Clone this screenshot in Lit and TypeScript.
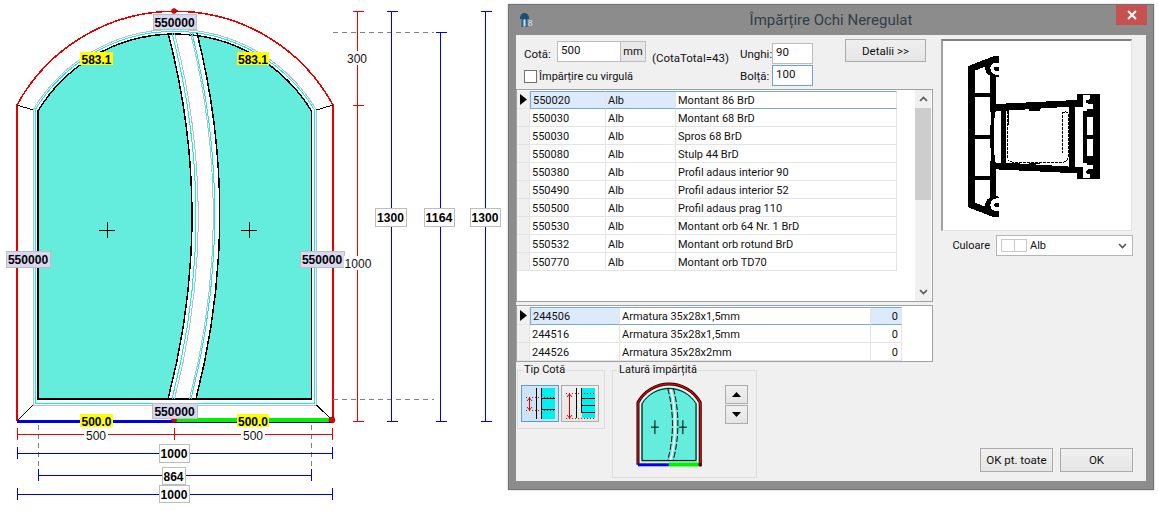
import { LitElement, html, css, svg } from "lit";
import { customElement } from "lit/decorators.js";

const UI_FONT = css`Roboto, "Noto Sans", sans-serif`;

const PROFILES = [
  ["550020", "Alb", "Montant 86 BrD"],
  ["550030", "Alb", "Montant 68 BrD"],
  ["550030", "Alb", "Spros 68 BrD"],
  ["550080", "Alb", "Stulp 44 BrD"],
  ["550380", "Alb", "Profil adaus interior 90"],
  ["550490", "Alb", "Profil adaus interior 52"],
  ["550500", "Alb", "Profil adaus prag 110"],
  ["550530", "Alb", "Montant orb 64 Nr. 1 BrD"],
  ["550532", "Alb", "Montant orb rotund BrD"],
  ["550770", "Alb", "Montant orb TD70"],
];

const REINFORCEMENTS = [
  ["244506", "Armatura 35x28x1,5mm", "0"],
  ["244516", "Armatura 35x28x1,5mm", "0"],
  ["244526", "Armatura 35x28x2mm", "0"],
];

// window outline, shared by the big drawing and the small picker
const OUTER = "M17 421 V105 A180 180 0 0 1 333 105 V421";
const GLASS = "M38 111 A160 160 0 0 1 311.5 111 V399 H38 Z";
const CYAN = "M35 110 A163.5 163.5 0 0 1 314.5 110 V403 H35 Z";
const GRAY = "M33 110 A165 165 0 0 1 316.5 110 V405 H33 Z";
const MULLION_L = "M168 33 Q216 216 168 399";
const MULLION_R = "M197 33 Q243 216 196 399";
const MULLION_FILL = "M168 33 Q216 216 168 399 L196 399 Q243 216 197 33 Z";

const hDim = (x1: number, x2: number, y: number, cls: string) => svg`
  <path class=${cls} d="M${x1} ${y} H${x2} M${x1} ${y - 6} V${y + 6} M${x2} ${y - 6} V${y + 6}" />`;

const vDim = (x: number, y1: number, y2: number, cls: string) => svg`
  <path class=${cls} d="M${x} ${y1} V${y2} M${x - 5} ${y1} H${x + 6} M${x - 5} ${y2} H${x + 6}" />`;

// the reference font is tall and narrow, so squeeze digits to their measured width
const textWidth = (text: string) => text.replace(".", "").length * 6.7 + (text.includes(".") ? 3.2 : 0);

const tag = (x: number, y: number, w: number, h: number, text: string, cls: string) => svg`
  <rect class="tag ${cls}" x=${x} y=${y} width=${w} height=${h} />
  <text
    class="tag-text ${cls}"
    x=${x + w / 2}
    y=${y + h / 2 + 5}
    textLength=${textWidth(text)}
    lengthAdjust="spacingAndGlyphs"
  >${text}</text>`;

@customElement("window-drawing")
class WindowDrawing extends LitElement {
  static styles = css`
    :host {
      display: block;
      width: 508px;
      height: 511px;
    }
    svg {
      display: block;
    }
    path,
    line,
    rect {
      shape-rendering: crispEdges;
      fill: none;
    }
    .glass {
      fill: #64ecdd;
    }
    .white {
      fill: #fff;
    }
    .ln-black {
      stroke: #000;
      stroke-width: 1.5;
    }
    .ln-cyan {
      stroke: #00f2f2;
      stroke-width: 1;
    }
    .ln-gray {
      stroke: #bdbdbd;
      stroke-width: 1;
    }
    .ln-red {
      stroke: #e80000;
      stroke-width: 1.6;
    }
    .thin-black {
      stroke: #000;
    }
    .d-red {
      stroke: #f00000;
    }
    .d-blue {
      stroke: #0000e6;
    }
    .dash {
      stroke: #808080;
      stroke-dasharray: 5 4;
    }
    .bar-blue {
      stroke: #0000f0;
      stroke-width: 3;
    }
    .bar-green {
      stroke: #00f000;
      stroke-width: 4;
    }
    .dot {
      fill: #e80000;
      stroke: #600;
      stroke-width: 0.5;
    }
    .tag {
      stroke: none;
    }
    .tag.code {
      fill: #d8d8f0;
      stroke: #bdbdbd;
    }
    .tag.len {
      fill: #ffff00;
    }
    .tag.dim {
      fill: #fff;
      stroke: #bdbdbd;
    }
    .tag.plain {
      fill: #fff;
    }
    .tag-text {
      font: bold 13px "Liberation Sans", Arial, sans-serif;
      text-anchor: middle;
      fill: #000;
    }
    .tag-text.plain {
      font: 13px "Liberation Sans", Arial, sans-serif;
      fill: #111;
    }
  `;

  render() {
    return html`
      <svg width="508" height="511" viewBox="0 0 508 511">
        <path class="white ln-red" d=${OUTER} />
        <path class="white ln-gray" d=${GRAY} />
        <path class="ln-cyan" d=${CYAN} />
        <path class="glass" d=${GLASS} />
        <path class="white" d=${MULLION_FILL} />
        <path class="ln-black" d=${GLASS} />
        <path class="ln-black" d=${MULLION_L} />
        <path class="ln-black" d=${MULLION_R} />
        <path class="ln-cyan" d="M172 33 Q220 216 172 399 M192 33 Q238 216 191 399" />
        <path class="ln-gray" d="M174.5 33 Q222 216 174.5 399 M190.5 33 Q236.5 216 189.5 399" />
        <path class="thin-black" d="M17 105 L33 110 M333 105 L316.5 110 M17 421 L33 405 M333 421 L316.5 405" />
        <path class="thin-black" d="M99 230 H115 M107 222 V238 M241 230 H257 M249 222 V238" />
        <path class="bar-blue" d="M17 421.5 H174" />
        <path class="bar-green" d="M174 420 H333" />
        <path class="d-blue" d="M174 422.5 H333" />
        <circle class="dot" cx="174" cy="11" r="2.5" />
        <circle class="dot" cx="174" cy="420" r="2.5" />
        <circle class="dot" cx="332" cy="420" r="3" />

        <path class="dash" d="M333 32 H434 M333 399 H434 M38 425 V469 M311 425 V469" />
        ${hDim(17, 174, 434, "d-red")} ${hDim(174, 332, 434, "d-red")}
        ${hDim(17, 332, 453, "d-blue")} ${hDim(38, 311, 475, "d-blue")}
        ${hDim(17, 332, 494, "d-blue")}
        ${vDim(357.5, 11, 105, "d-red")} ${vDim(357.5, 105, 421, "d-red")}
        ${vDim(391.5, 11, 421, "d-blue")} ${vDim(440.5, 32, 421, "d-blue")}
        ${vDim(485.5, 11, 421, "d-blue")}

        ${tag(153, 14, 43, 15, "550000", "code")} ${tag(6, 251, 44, 16, "550000", "code")}
        ${tag(300, 251, 44, 16, "550000", "code")} ${tag(152, 403, 45, 15, "550000", "code")}
        ${tag(80, 52, 33, 13, "583.1", "len")} ${tag(237, 52, 32, 13, "583.1", "len")}
        ${tag(80, 414, 33, 13, "500.0", "len")} ${tag(237, 414, 32, 13, "500.0", "len")}
        ${tag(84, 428, 24, 13, "500", "plain")} ${tag(241, 428, 24, 13, "500", "plain")}
        ${tag(159, 444, 30, 18, "1000", "dim")} ${tag(162, 467, 23, 17, "864", "dim")}
        ${tag(159, 485, 30, 17, "1000", "dim")}
        ${tag(345, 51, 24, 14, "300", "plain")} ${tag(344, 256, 28, 14, "1000", "plain")}
        ${tag(375, 208, 31, 18, "1300", "dim")} ${tag(424, 208, 30, 18, "1164", "dim")}
        ${tag(470, 208, 30, 18, "1300", "dim")}
      </svg>
    `;
  }
}

@customElement("split-dialog")
class SplitDialog extends LitElement {
  static styles = css`
    * {
      box-sizing: border-box;
    }
    :host {
      display: block;
      width: 644px;
      height: 484px;
      margin-top: 4px;
      background: #8c8c8c;
      border: 1px solid #727272;
      box-shadow: 0 0 2px rgba(0, 0, 0, 0.25);
      font: 11px ${UI_FONT};
      color: #111;
    }
    .titlebar {
      display: grid;
      grid-template-columns: 1fr auto 1fr;
      height: 30px;
    }
    .app-icon {
      margin: 7px 0 0 11px;
    }
    .title {
      font-size: 15px;
      color: #333d47;
      padding-top: 6px;
    }
    .close {
      justify-self: end;
      display: flex;
      align-items: center;
      justify-content: center;
      width: 31px;
      height: 20px;
      margin-right: 6px;
      background: #c75050;
    }
    .client {
      display: grid;
      grid-template-columns: 417px 192px;
      column-gap: 8px;
      height: 446px;
      margin: 0 7px;
      background: #f0f0f0;
    }
    .left,
    .right {
      display: flex;
      flex-direction: column;
      min-width: 0;
    }
    .top {
      display: flex;
      height: 54px;
      padding-left: 8px;
      white-space: nowrap;
    }
    .cota {
      width: 122px;
      margin-top: 6px;
    }
    .cota-row {
      display: flex;
      align-items: flex-end;
    }
    .cota-row label {
      width: 33px;
      padding-bottom: 1px;
      font-size: 11.5px;
    }
    .field {
      height: 21px;
      padding: 0 3px;
      background: #fff;
      border: 1px solid #bdbdbd;
      line-height: 17px;
      font-size: 11.5px;
    }
    .field.value {
      width: 64px;
    }
    .field.focus {
      border-color: #6f9fd3;
    }
    .unit {
      display: flex;
      align-items: center;
      justify-content: center;
      width: 25px;
      height: 21px;
      border: 1px solid #bdbdbd;
      border-left: none;
      background: #e8e8e8;
    }
    .check {
      display: flex;
      align-items: center;
      gap: 2px;
      margin-top: 8px;
    }
    .box {
      flex: none;
      width: 13px;
      height: 13px;
      background: #fff;
      border: 1px solid #707070;
    }
    .total {
      width: 88px;
      margin: 16px 0 0 6px;
      font-size: 11.5px;
    }
    .angles {
      display: grid;
      grid-template-columns: 32px 41px;
      grid-auto-rows: 21px;
      row-gap: 1px;
      align-items: center;
      margin-top: 8px;
      font-size: 11.5px;
    }
    button {
      font: inherit;
      font-size: 11.5px;
      color: inherit;
      padding: 0;
      border: 1px solid #acacac;
      background: linear-gradient(#f0f0f0, #e5e5e5);
    }
    .details {
      width: 81px;
      height: 23px;
      margin: 4px 0 0 32px;
    }
    .list {
      display: flex;
      background: #fff;
      border: 1px solid #a0a0a0;
    }
    .list.profiles {
      height: 213px;
      padding-top: 1px;
    }
    .list.reinforcements {
      height: 57px;
      margin-top: 3px;
      padding-top: 1px;
    }
    .rows {
      flex: none;
    }
    .row {
      display: grid;
      height: 18px;
      line-height: 19px;
    }
    .profiles .row {
      grid-template-columns: 13px 76px 70px 221px;
    }
    .reinforcements .row {
      grid-template-columns: 13px 90px 251px 31px;
    }
    .cell {
      padding-left: 2px;
      border-right: 1px solid #e4e4e4;
      border-bottom: 1px solid #e4e4e4;
      white-space: nowrap;
      overflow: hidden;
    }
    .cell.num {
      padding: 0 3px 0 0;
      text-align: right;
    }
    .marker {
      padding: 0;
      background: #f0f0f0;
      display: flex;
      align-items: center;
      justify-content: center;
    }
    .row.current .cell:not(.marker) {
      border-top: 1px solid #7da7d9;
      border-bottom: 1px solid #7da7d9;
      line-height: 17px;
    }
    .row.current .cell.hl {
      background: #dcebfb;
    }
    .row.current .cell.hl-first {
      border-left: 1px solid #7da7d9;
    }
    .scrollbar {
      display: flex;
      flex-direction: column;
      align-items: center;
      width: 16px;
      margin: -1px 0 0 18px;
      background: #f0f0f0;
    }
    .sb-arrow {
      display: flex;
      align-items: center;
      justify-content: center;
      height: 18px;
    }
    .sb-thumb {
      width: 100%;
      height: 92px;
      background: #cdcdcd;
    }
    .sb-track {
      flex: 1;
    }
    .bottom {
      display: flex;
      align-items: flex-start;
      gap: 7px;
      padding-left: 1px;
    }
    fieldset {
      min-inline-size: 0;
      margin: 0;
      border: 1px solid #dcdcdc;
      padding: 0;
    }
    legend {
      margin-left: 5px;
      padding: 0 1px;
      line-height: 16px;
      height: 16px;
    }
    .tip {
      width: 88px;
      height: 67px;
    }
    .tip-body {
      display: flex;
      gap: 2px;
      padding: 7px 0 0 3px;
    }
    .tip-btn {
      display: block;
      width: 38px;
      height: 37px;
    }
    .tip-btn.on {
      background: #cce4f7;
      border-color: #5a9ad9;
    }
    .latura {
      width: 145px;
      height: 116px;
    }
    .latura-body {
      display: flex;
      align-items: flex-start;
      padding: 4px 0 0 23px;
    }
    .updown {
      display: flex;
      flex-direction: column;
      gap: 1px;
      margin: 3px 0 0 23px;
    }
    .updown button {
      display: flex;
      align-items: center;
      justify-content: center;
      width: 23px;
      height: 19px;
    }
    .right {
      padding-top: 4px;
    }
    .preview {
      width: 191px;
      height: 192px;
      background: #fff;
      border: 1px solid #e2e2e2;
      border-top: 2px solid #808080;
      border-left: 2px solid #a0a0a0;
    }
    .preview svg {
      shape-rendering: crispEdges;
    }
    .color-row {
      display: flex;
      align-items: center;
      justify-content: flex-end;
      gap: 6px;
      margin-top: 4px;
    }
    .select {
      display: flex;
      align-items: center;
      width: 137px;
      height: 21px;
      padding: 0 5px 0 4px;
      background: #fff;
      border: 1px solid #b5b5b5;
    }
    .swatch {
      display: grid;
      grid-template-columns: 1fr 1fr;
      width: 26px;
      height: 13px;
      margin-right: 3px;
      border: 1px solid #c8c8c8;
    }
    .swatch i + i {
      border-left: 1px solid #c8c8c8;
    }
    .chev {
      margin-left: auto;
    }
    .actions {
      display: flex;
      justify-content: flex-end;
      gap: 7px;
      margin-top: auto;
      padding-bottom: 9px;
    }
    .actions button {
      width: 73px;
      height: 24px;
    }
  `;

  private _marker() {
    return html`<svg width="7" height="11" viewBox="0 0 7 11"><path d="M0 0 L7 5.5 L0 11 Z" fill="#000" /></svg>`;
  }

  private _chevron(up: boolean) {
    return html`<svg width="9" height="6" viewBox="0 0 9 6">
      <path d=${up ? "M1 5 L4.5 1.5 L8 5" : "M1 1 L4.5 4.5 L8 1"} fill="none" stroke="#555" stroke-width="1.6" />
    </svg>`;
  }

  private _profileRow(r: string[], i: number) {
    const current = i === 0;
    return html`<div class="row ${current ? "current" : ""}">
      <div class="cell marker">${current ? this._marker() : ""}</div>
      <div class="cell hl hl-first">${r[0]}</div>
      <div class="cell hl">${r[1]}</div>
      <div class="cell">${r[2]}</div>
    </div>`;
  }

  private _reinforcementRow(r: string[], i: number) {
    const current = i === 0;
    return html`<div class="row ${current ? "current" : ""}">
      <div class="cell marker">${current ? this._marker() : ""}</div>
      <div class="cell hl hl-first">${r[0]}</div>
      <div class="cell">${r[1]}</div>
      <div class="cell num hl">${r[2]}</div>
    </div>`;
  }

  private _profileHalf() {
    // upper half of the section, the lower half is the same thing mirrored
    return svg`
      <path fill="#000" d="M115 78 L192 48 H208 V110 L197 112 V192 L440 180 V162 H510 V291 H115 Z" />
      <g fill="#fff">
        <path d="M135 92 L165 80 C165 95 172 105 180 106 V160 H135 Z" />
        <path d="M207 68 H195 C185 68 178 80 182 92 C186 102 197 106 207 106 V92 L197 92 C190 88 190 82 196 80 L207 80 Z" />
        <path d="M135 172 H180 C182 210 183 250 181 285 H135 Z" />
        <path d="M197 212 H212 V291 H193 C191 260 192 235 197 212 Z" />
        <path d="M228 212 L420 200 V291 H228 Z" />
        <path d="M434 200 H458 V291 H434 Z" />
        <path d="M460 165 H480 V178 L468 180 C466 190 475 195 490 192 V206 H470 V212 H458 V205 C462 190 458 175 460 165 Z" />
        <path d="M470 232 H490 V285 H470 Z" />
      </g>
      <path fill="#000" d="M418 200 H434 V291 H418 Z M212 208 H228 V291 H212 Z M296 208 H330 V212 H296 Z" />`;
  }

  private _profileSection() {
    // traced in 3x zoom coordinates, hence the odd viewBox
    return html`<svg width="189" height="189" viewBox="39 3 567 567">
      ${this._profileHalf()}
      <g transform="matrix(1 0 0 -1 0 580)">${this._profileHalf()}</g>
      <path fill="#000" d="M135 285 H180 V297 H135 Z M470 285 H490 V297 H470 Z" />
      <path
        fill="none"
        stroke="#000"
        stroke-width="3"
        stroke-dasharray="9 3"
        d="M232 214 V352 Q232 366 245 366 H402 Q416 360 416 345 L414 222 Q412 212 398 218 L398 340"
      />
      <path fill="none" stroke="#000" stroke-width="3" d="M236 214 V256" />
    </svg>`;
  }

  private _tipIconA() {
    return html`<svg width="36" height="35" viewBox="0 0 36 35">
      <rect x="20" y="2" width="13" height="31" fill="#00f0f0" />
      <path d="M14.5 2 V33 M19.5 2 V33 M20 12.5 H33 M20 23.5 H33" stroke="#000" fill="none" />
      <path d="M4 11.5 H33 M4 24.5 H33" stroke="#e00000" stroke-dasharray="1 2" fill="none" />
      <path d="M7.5 12 V24 M5 15 L7.5 12 L10 15 M5 21 L7.5 24 L10 21" stroke="#e00000" fill="none" />
    </svg>`;
  }

  private _tipIconB() {
    return html`<svg width="36" height="35" viewBox="0 0 36 35">
      <rect x="20" y="2" width="13" height="30" fill="#00f0f0" />
      <path d="M14.5 2 V32 M19.5 2 V26.5 H33 M20 12.5 H33 M20 19.5 H33" stroke="#000" fill="none" />
      <path d="M4 7.5 H33 M4 32.5 H33" stroke="#e00000" stroke-dasharray="1 2" fill="none" />
      <path d="M7.5 8 V32 M5 11 L7.5 8 L10 11 M5 29 L7.5 32 L10 29" stroke="#e00000" fill="none" />
    </svg>`;
  }

  private _miniWindow() {
    const stroke = (color: string, w = 1, extra = "") =>
      `fill:none;stroke:${color};stroke-width:${w}px;vector-effect:non-scaling-stroke;${extra}`;
    return html`<svg width="66" height="85" viewBox="7 1 335 431">
      <path d=${OUTER} fill="#fff" style=${stroke("#000", 3)} />
      <path d=${OUTER} style=${stroke("#e00000", 1.5)} />
      <path d=${CYAN} style=${stroke("#00e8e8")} />
      <path d=${GLASS} fill="#64ecdd" />
      <path d=${MULLION_FILL} fill="#64ecdd" />
      <path d="M178 33 Q226 216 178 399 L186 399 Q233 216 187 33 Z" fill="#fff" />
      <path d=${GLASS} style=${stroke("#000")} />
      <path d=${MULLION_L} style=${stroke("#000", 1, "stroke-dasharray:6 2;")} />
      <path d=${MULLION_R} style=${stroke("#000", 1, "stroke-dasharray:6 2;")} />
      <path d="M83 230 H123 M103 195 V265 M225 230 H265 M245 195 V265" style=${stroke("#000")} />
      <path d="M17 421 H174" style=${stroke("#0000f0", 3)} />
      <path d="M174 419 H333" style=${stroke("#00f000", 4)} />
      <circle cx="333" cy="420" r="10" fill="#600" />
    </svg>`;
  }

  render() {
    return html`
      <div class="titlebar">
        <svg class="app-icon" width="14" height="15" viewBox="0 0 14 15">
          <path d="M0 6 A4.5 5 0 0 1 9 6 V7 H0 Z" fill="#1d4f74" />
          <rect x="1.5" y="7" width="6" height="8" fill="#2d6185" />
          <rect x="3.5" y="7.5" width="2" height="7" fill="#cfe2ee" />
          <text x="8" y="14" font-size="9" font-family="Liberation Serif, serif" fill="#dfe9f0">8</text>
        </svg>
        <div class="title">Împărțire Ochi Neregulat</div>
        <div class="close">
          <svg width="10" height="10" viewBox="0 0 10 10">
            <path d="M1 1 L9 9 M9 1 L1 9" stroke="#fff" stroke-width="2" />
          </svg>
        </div>
      </div>
      <div class="client">
        <div class="left">
          <div class="top">
            <div class="cota">
              <div class="cota-row">
                <label>Cotă:</label>
                <div class="field value">500</div>
                <div class="unit">mm</div>
              </div>
              <div class="check"><span class="box"></span>Împărțire cu virgulă</div>
            </div>
            <div class="total">(CotaTotal=43)</div>
            <div class="angles">
              <span>Unghi:</span>
              <div class="field">90</div>
              <span>Bolță:</span>
              <div class="field focus">100</div>
            </div>
            <button class="details">Detalii &gt;&gt;</button>
          </div>
          <div class="list profiles">
            <div class="rows">${PROFILES.map((r, i) => this._profileRow(r, i))}</div>
            <div class="scrollbar">
              <div class="sb-arrow">${this._chevron(true)}</div>
              <div class="sb-thumb"></div>
              <div class="sb-track"></div>
              <div class="sb-arrow">${this._chevron(false)}</div>
            </div>
          </div>
          <div class="list reinforcements">
            <div class="rows">${REINFORCEMENTS.map((r, i) => this._reinforcementRow(r, i))}</div>
          </div>
          <div class="bottom">
            <fieldset class="tip">
              <legend>Tip Cotă</legend>
              <div class="tip-body">
                <button class="tip-btn on">${this._tipIconA()}</button>
                <button class="tip-btn">${this._tipIconB()}</button>
              </div>
            </fieldset>
            <fieldset class="latura">
              <legend>Latură împărțită</legend>
              <div class="latura-body">
                ${this._miniWindow()}
                <div class="updown">
                  <button>
                    <svg width="9" height="5" viewBox="0 0 9 5"><path d="M0 5 L4.5 0 L9 5 Z" fill="#000" /></svg>
                  </button>
                  <button>
                    <svg width="9" height="5" viewBox="0 0 9 5"><path d="M0 0 L4.5 5 L9 0 Z" fill="#000" /></svg>
                  </button>
                </div>
              </div>
            </fieldset>
          </div>
        </div>
        <div class="right">
          <div class="preview">${this._profileSection()}</div>
          <div class="color-row">
            <span>Culoare</span>
            <div class="select">
              <div class="swatch"><i></i><i></i></div>
              Alb
              <span class="chev">${this._chevron(false)}</span>
            </div>
          </div>
          <div class="actions">
            <button>OK pt. toate</button>
            <button>OK</button>
          </div>
        </div>
      </div>
    `;
  }
}

@customElement("app-root")
export class AppRoot extends LitElement {
  static styles = css`
    :host {
      display: flex;
      align-items: flex-start;
      width: 1158px;
      height: 511px;
      background: #fff;
      overflow: hidden;
    }
  `;

  render() {
    return html`<window-drawing></window-drawing><split-dialog></split-dialog>`;
  }
}

export { WindowDrawing, SplitDialog };
